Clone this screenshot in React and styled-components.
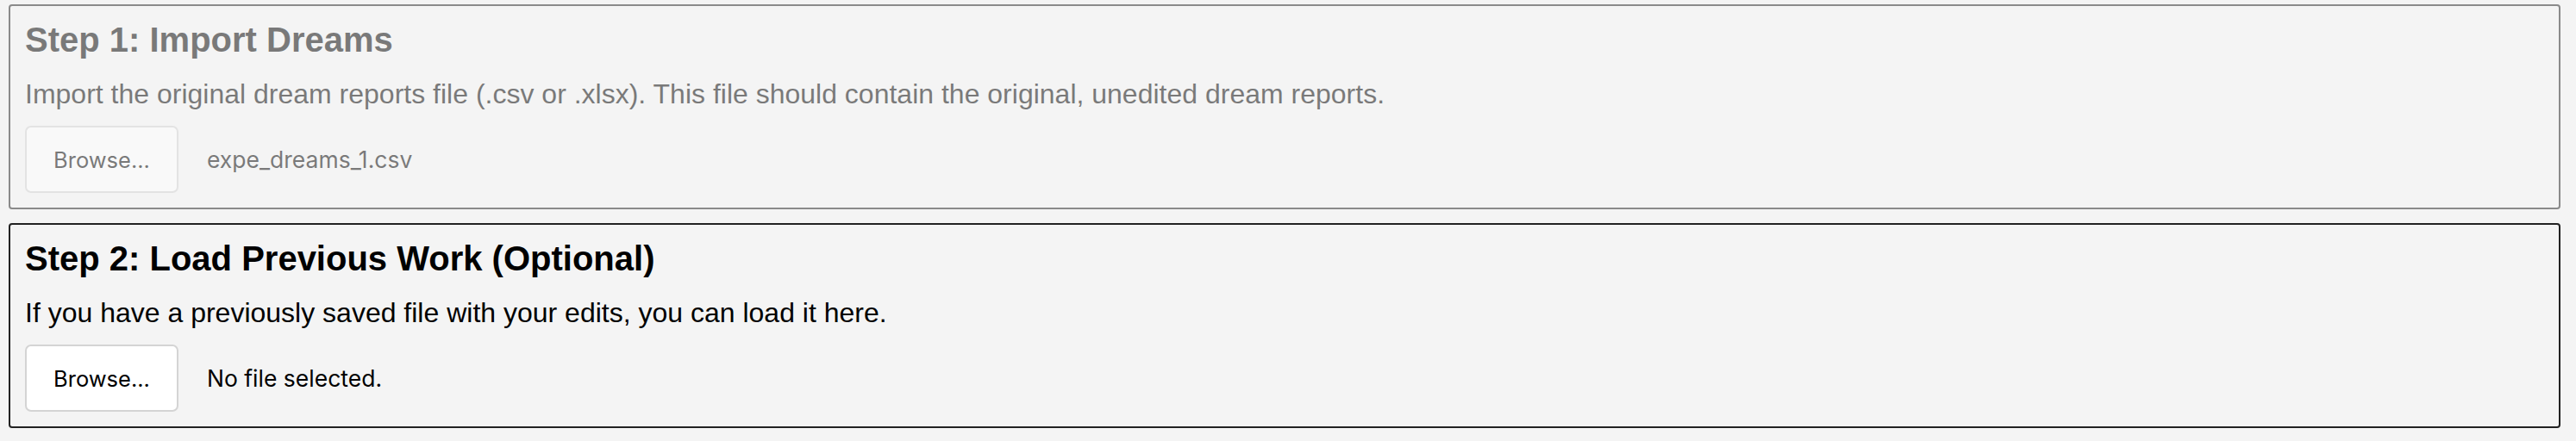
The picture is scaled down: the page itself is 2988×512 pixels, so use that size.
import React from "react";
import styled, { createGlobalStyle } from "styled-components";

const GlobalStyle = createGlobalStyle`
  html, body {
    margin: 0;
    padding: 0;
    background: #f4f4f4;
  }
  body {
    font-family: "Liberation Sans", Arial, sans-serif;
    color: #000;
  }
`;

const Page = styled.div`
  display: flex;
  flex-direction: column;
  gap: 16px;
  padding: 5px 18px 0 10px;
`;

const Section = styled.section`
  border: 2px solid #222;
  border-radius: 4px;
  background: #f4f4f4;
  padding: 15px 17px 17px 17px;
  opacity: ${(p) => (p.$dimmed ? 0.5 : 1)};
`;

const Title = styled.h2`
  margin: 0 0 15px;
  font-size: 40px;
  line-height: 48px;
  font-weight: 700;
`;

const Description = styled.p`
  margin: 0 0 13px;
  font-size: 32px;
  line-height: 48px;
`;

const FileRow = styled.div`
  display: flex;
  align-items: center;
  gap: 33px;
`;

const BrowseButton = styled.button`
  height: 78px;
  width: 178px;
  padding: 0;
  background: #fff;
  border: 2px solid #d4d4d4;
  border-radius: 7px;
  font-family: Inter, "Liberation Sans", sans-serif;
  font-size: 25.5px;
  color: #000;
`;

const FileName = styled.span`
  font-family: Inter, "Liberation Sans", sans-serif;
  font-size: 26.5px;
  color: #000;
`;

function Step({ title, description, fileName, dimmed }) {
  return (
    <Section $dimmed={dimmed}>
      <Title>{title}</Title>
      <Description>{description}</Description>
      <FileRow>
        <BrowseButton type="button">Browse...</BrowseButton>
        <FileName>{fileName}</FileName>
      </FileRow>
    </Section>
  );
}

export default function App() {
  return (
    <>
      <GlobalStyle />
      <Page>
        <Step
          dimmed
          title="Step 1: Import Dreams"
          description="Import the original dream reports file (.csv or .xlsx). This file should contain the original, unedited dream reports."
          fileName="expe_dreams_1.csv"
        />
        <Step
          title="Step 2: Load Previous Work (Optional)"
          description="If you have a previously saved file with your edits, you can load it here."
          fileName="No file selected."
        />
      </Page>
    </>
  );
}
